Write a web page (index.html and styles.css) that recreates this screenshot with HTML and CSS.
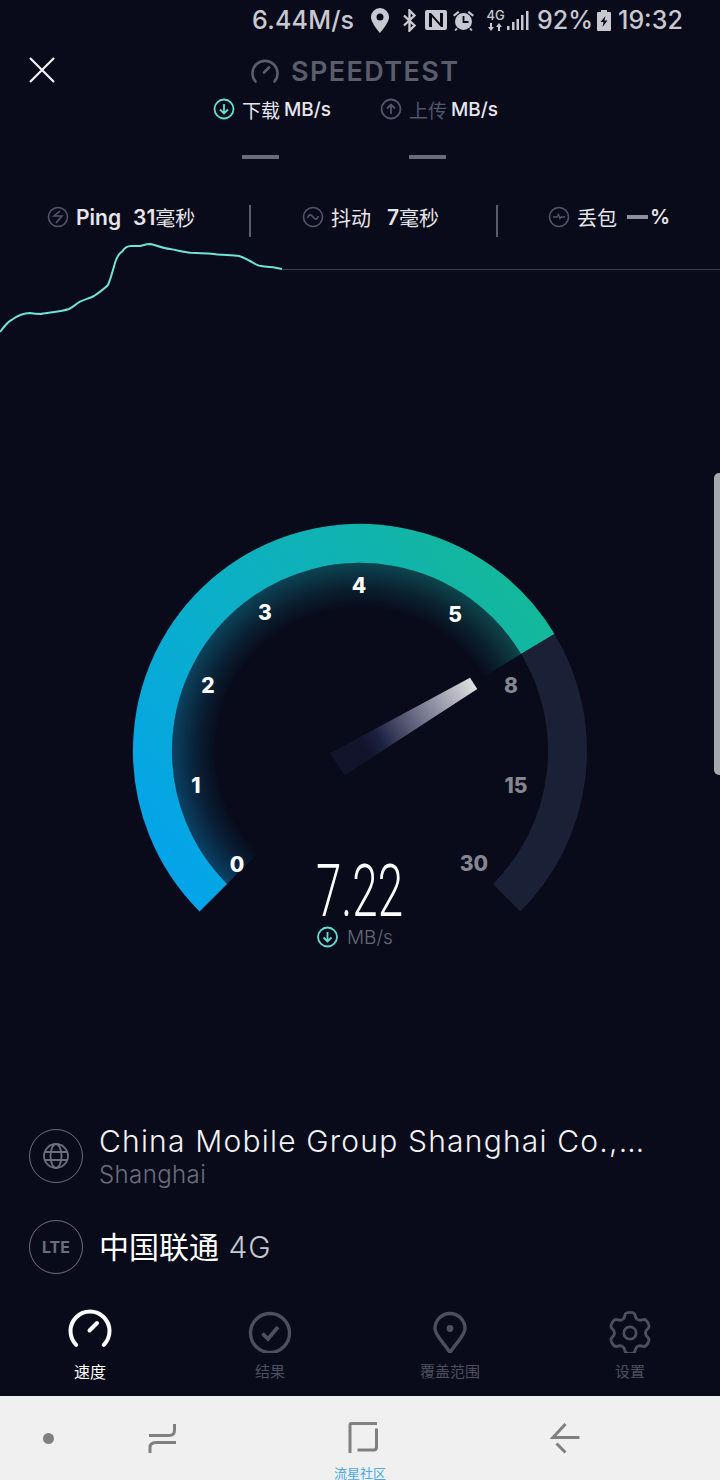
FILE: index.html
```html
<!DOCTYPE html>
<html>
<head>
	<meta charset="utf-8">
	<title>Speedtest</title>
	<link rel="stylesheet" href="styles.css">
</head>
<body>
<div class="screen">
	<div class="edge_handle"></div>

	<!-- status bar -->
	<div class="status">
		<span class="net_speed">6.44M/s</span>
		<svg class="st_pin" width="18" height="25" viewBox="0 0 18 25"><path fill-rule="evenodd" d="M9 0a9 9 0 0 1 9 9c0 6-9 16-9 16S0 15 0 9a9 9 0 0 1 9-9zm0 5.500a3.500 3.500 0 1 0 0 7 3.500 3.500 0 0 0 0-7z"/></svg>
		<svg class="st_bt" width="15" height="23" viewBox="0 0 15 23"><path d="M2 6.500l10.500 10L7.500 21.500V1.500l5 5L2 16.500" fill="none" stroke="#c8c9d0" stroke-width="2.400"/></svg>
		<svg class="st_nfc" width="22" height="20" viewBox="0 0 22 20"><path fill-rule="evenodd" d="M2 0h18a2 2 0 0 1 2 2v16a2 2 0 0 1-2 2H2a2 2 0 0 1-2-2V2a2 2 0 0 1 2-2zm2 3v14h3V7l9 10h2V3h-3v10L6 3z"/></svg>
		<svg class="st_alarm" width="21" height="21" viewBox="0 0 21 21"><path d="M0 5l5-4 1.500 1.500-5 4zM21 5l-5-4-1.500 1.500 5 4zM3 18l-1.500 2 1.300 1 2-2zM18 18l1.500 2-1.300 1-2-2z"/><circle cx="10.500" cy="11.500" r="8.500"/><path d="M10.500 6v6h5" fill="none" stroke="#090b1b" stroke-width="1.800"/></svg>
		<span class="st_net">
			<span class="st_4g">4G</span>
			<svg width="15" height="8" viewBox="0 0 15 8"><path d="M2 0h2v4h2L3 8 0 4h2zM11 0l3 4h-2v4h-2V4H8z"/></svg>
		</span>
		<svg class="st_signal" width="22" height="19" viewBox="0 0 22 19"><path d="M0 15h2.500v4H0zM5 11h2.500v8H5zM9.500 8H12v11H9.500zM14 4h2.500v15H14zM19 0h2.500v19H19z"/></svg>
		<span class="st_pct">92%</span>
		<svg class="st_batt" width="14" height="21" viewBox="0 0 14 21"><path fill-rule="evenodd" d="M4 0h6v2h3a1 1 0 0 1 1 1v17a1 1 0 0 1-1 1H1a1 1 0 0 1-1-1V3a1 1 0 0 1 1-1h3zM8.500 6L3.500 12h3L5.500 17l5-6.500h-3z"/></svg>
		<span class="st_time">19:32</span>
	</div>

	<!-- title -->
	<div class="top_row">
		<svg class="close" width="26" height="26" viewBox="0 0 26 26"><path d="M1 1l24 24M25 1L1 25" fill="none" stroke="#f2f2f4" stroke-width="2.200"/></svg>
		<div class="brand">
			<svg width="28" height="24" viewBox="0 0 28 24"><path d="M4.500 22.500a12.500 12.500 0 1 1 19 0" fill="none" stroke="#5b5d6b" stroke-width="2.600" stroke-linecap="round"/><path d="M13 13.500l5-5" stroke="#5b5d6b" stroke-width="2.600" stroke-linecap="round"/></svg>
			<span>SPEEDTEST</span>
		</div>
	</div>

	<!-- download / upload -->
	<div class="speeds">
		<div class="speed_col">
			<div class="speed_head">
				<svg class="circ" width="22" height="22" viewBox="0 0 22 22"><circle cx="11" cy="11" r="9.500" fill="none" stroke="#62dfd0" stroke-width="1.800"/><path d="M11 6v9.500M7 11.500l4 4 4-4" fill="none" stroke="#62dfd0" stroke-width="1.800"/></svg>
				<span class="cn_light">下载</span><b>MB/s</b>
			</div>
			<div class="dash"></div>
		</div>
		<div class="speed_col">
			<div class="speed_head">
				<svg class="circ" width="22" height="22" viewBox="0 0 22 22"><circle cx="11" cy="11" r="9.500" fill="none" stroke="#53566a" stroke-width="1.800"/><path d="M11 16V6.500M7 10.500l4-4 4 4" fill="none" stroke="#53566a" stroke-width="1.800"/></svg>
				<span class="cn_dim">上传</span><b>MB/s</b>
			</div>
			<div class="dash"></div>
		</div>
	</div>

	<!-- ping row -->
	<div class="stats">
		<div class="stat first">
			<svg class="circ" width="22" height="22" viewBox="0 0 22 22"><circle cx="11" cy="11" r="9.500" fill="none" stroke="#53566a" stroke-width="1.600"/><path d="M13 5l-6 5h8l-6 7" fill="none" stroke="#53566a" stroke-width="1.600"/></svg>
			<b>Ping</b><b class="val">31</b><span>毫秒</span>
		</div>
		<div class="stat">
			<svg class="circ" width="22" height="22" viewBox="0 0 22 22"><circle cx="11" cy="11" r="9.500" fill="none" stroke="#53566a" stroke-width="1.600"/><path d="M5.500 12c1.500-4 3.500-4 5.500-1s4 3 5.500-1" fill="none" stroke="#53566a" stroke-width="1.600"/></svg>
			<span>抖动</span><b class="val wide">7</b><span>毫秒</span>
		</div>
		<div class="stat last">
			<svg class="circ" width="22" height="22" viewBox="0 0 22 22"><circle cx="11" cy="11" r="9.500" fill="none" stroke="#53566a" stroke-width="1.600"/><path d="M5 11h4l1.500-2.500 1.500 4 1-1.500h4" fill="none" stroke="#53566a" stroke-width="1.400"/></svg>
			<span>丢包</span><i class="stat_dash"></i><b class="pct">%</b>
		</div>
	</div>

	<!-- live graph -->
	<svg class="graph" width="720" height="96" viewBox="0 240 720 96">
		<path d="M282 269.500H720" stroke="#3a3d4c" stroke-width="1" fill="none"/>
		<path d="M0 332C4 327 7 322 11.500 320 17 316 24 313 30 313 35 314 38 314 41 314 50 312 60 312 69 309 73 307 76 304 80 301.700 86 299 90 298 94 296 100 292 104 289 108 285 111 278 113 270 115 263 117 256 120 253 122 251.700 125 247 128 246 131 246 134 246 137 246 140 246 144 245 147 244 150.600 244 156 245 162 248 170 249 177 250 183 252 190.500 252.700 197 253 204 253 211 253.700 220 255 230 255 239 256 243 257 246 259 250 261 254 263 257 266 261 266 266 267 271 267 275.500 267.700L282 269" fill="none" stroke="#6fe3d4" stroke-width="2"/>
	</svg>

	<!-- gauge -->
	<svg class="gauge" width="720" height="460" viewBox="0 500 720 460">
		<defs>
			<linearGradient id="arc_fill" gradientUnits="userSpaceOnUse" x1="190" y1="900" x2="540" y2="620">
				<stop offset="0" stop-color="#03a4ea"/>
				<stop offset="0.4" stop-color="#0aaecc"/>
				<stop offset="0.8" stop-color="#10b3ae"/>
				<stop offset="1" stop-color="#14b89a"/>
			</linearGradient>
			<linearGradient id="glow_tint" gradientUnits="userSpaceOnUse" x1="190" y1="900" x2="540" y2="620">
				<stop offset="0" stop-color="#0a4a74"/>
				<stop offset="1" stop-color="#0e4e50"/>
			</linearGradient>
			<radialGradient id="glow_fade" gradientUnits="userSpaceOnUse" cx="360" cy="751" r="188">
				<stop offset="0.76" stop-color="#000"/>
				<stop offset="0.87" stop-color="#555"/>
				<stop offset="1" stop-color="#ddd"/>
			</radialGradient>
			<mask id="glow_mask" maskUnits="userSpaceOnUse" x="160" y="550" width="400" height="400">
				<rect x="160" y="550" width="400" height="400" fill="url(#glow_fade)"/>
			</mask>
			<linearGradient id="needle_fill" gradientUnits="userSpaceOnUse" x1="338" y1="764" x2="474" y2="683">
				<stop offset="0" stop-color="#11142a"/>
				<stop offset="0.2" stop-color="#11142a"/>
				<stop offset="0.3" stop-color="#1a2040"/>
				<stop offset="0.6" stop-color="#70738a"/>
				<stop offset="1" stop-color="#dfe0e2"/>
			</linearGradient>
		</defs>
		<path d="M360 751L227.100 883.900A188 188 0 1 1 521 654L360 751z" fill="url(#glow_tint)" mask="url(#glow_mask)"/>
		<path d="M213.300 897.700A207.500 207.500 0 1 1 537.800 644" fill="none" stroke="url(#arc_fill)" stroke-width="39"/>
		<path d="M537.800 644A207.500 207.500 0 0 1 506.700 897.700" fill="none" stroke="#1a2136" stroke-width="39"/>
		<polygon points="470,677.700 477.300,689 345,775 330,753.300" fill="url(#needle_fill)"/>

		<text class="tick" x="237" y="872">0</text>
		<text class="tick" x="196" y="793">1</text>
		<text class="tick" x="208" y="693">2</text>
		<text class="tick" x="265" y="620">3</text>
		<text class="tick" x="359" y="593">4</text>
		<text class="tick" x="455" y="622">5</text>
		<text class="tick off" x="511" y="693">8</text>
		<text class="tick off" x="516" y="793">15</text>
		<text class="tick off" x="474" y="871">30</text>

		<text class="big_val" x="316" y="916" textLength="87" lengthAdjust="spacingAndGlyphs">7.22</text>
		<g fill="none" stroke="#62dfd0" stroke-width="1.800">
			<circle cx="327.500" cy="937" r="9.500"/>
			<path d="M327.500 932v9.500M323.500 937.500l4 4 4-4"/>
		</g>
		<text class="unit" x="347" y="943.500">MB/s</text>
	</svg>

	<!-- server info -->
	<div class="info">
		<div class="info_row">
			<div class="ring">
				<svg width="30" height="30" viewBox="0 0 30 30" fill="none" stroke="#6c6e7c" stroke-width="1.800"><circle cx="15" cy="15" r="12"/><ellipse cx="15" cy="15" rx="5.500" ry="12"/><path d="M3.500 11h23M3.500 19h23"/></svg>
			</div>
			<div>
				<div class="isp">China Mobile Group Shanghai Co.,…</div>
				<div class="city">Shanghai</div>
			</div>
		</div>
		<div class="info_row second">
			<div class="ring lte">LTE</div>
			<div class="carrier"><span>中国联通</span> 4G</div>
		</div>
	</div>

	<!-- tabs -->
	<div class="tabs">
		<div class="tab active">
			<svg width="44" height="44" viewBox="0 0 44 44"><path d="M8.200 35.800a19.500 19.500 0 1 1 27.600 0" fill="none" stroke="#fff" stroke-width="4" stroke-linecap="round"/><path d="M21.500 21.500L29 14" stroke="#fff" stroke-width="4" stroke-linecap="round"/></svg>
			<span>速度</span>
		</div>
		<div class="tab">
			<svg width="44" height="44" viewBox="0 0 44 44" fill="none" stroke="#4d4f5e" stroke-width="3.400"><circle cx="22" cy="24" r="19.500"/><path d="M14.500 24.500l5.500 5.500 10-12" stroke-width="3.800"/></svg>
			<span>结果</span>
		</div>
		<div class="tab">
			<svg width="44" height="44" viewBox="0 0 44 44"><path d="M22 43.500C15 33 7 26 7 19.500a15 15 0 0 1 30 0C37 26 29 33 22 43.500z" fill="none" stroke="#4d4f5e" stroke-width="3.400" stroke-linejoin="round"/><circle cx="22" cy="19.500" r="3.400" fill="#4d4f5e"/></svg>
			<span>覆盖范围</span>
		</div>
		<div class="tab">
			<svg width="44" height="44" viewBox="-22 -24 44 44" fill="none" stroke="#4d4f5e" stroke-width="2.800">
				<defs><path id="gear_tooth" d="M-7.750-13.420Q-5.600-14.500-5-18Q-4.500-20.600 0-20.600Q4.500-20.600 5-18Q5.600-14.500 7.750-13.420"/></defs>
				<use href="#gear_tooth"/>
				<use href="#gear_tooth" transform="rotate(60)"/>
				<use href="#gear_tooth" transform="rotate(120)"/>
				<use href="#gear_tooth" transform="rotate(180)"/>
				<use href="#gear_tooth" transform="rotate(240)"/>
				<use href="#gear_tooth" transform="rotate(300)"/>
				<circle r="6.200"/>
			</svg>
			<span>设置</span>
		</div>
	</div>

	<!-- android nav -->
	<div class="softkeys">
		<i class="key_dot"></i>
		<svg class="key_recent" width="30" height="32" viewBox="0 0 30 32" fill="none" stroke="#808080" stroke-width="3"><path d="M1 13.500H21q5.500 0 5.500-5V2"/><path d="M28 20.500H8q-6 0-6 5V31"/></svg>
		<svg class="key_home" width="30" height="32" viewBox="0 0 30 32" fill="none" stroke="#808080" stroke-width="3"><path d="M2 31V3q0-1.500 1.500-1.500H29"/><path d="M28.500 6.500V25q0 3-3 3H9.500"/></svg>
		<svg class="key_back" width="30" height="32" viewBox="0 0 30 32" fill="none" stroke="#808080" stroke-width="3"><path d="M15.500 2L3 15.500H29.500M6.500 21.500L15.500 30.500"/></svg>
		<span class="watermark">流星社区</span>
	</div>
</div>
</body>
</html>
```

FILE: styles.css
```css
* {
	box-sizing: border-box;
}
html, body {
	margin: 0;
	padding: 0;
	background-color: #090b1b;
}
body {
	font-family: "Inter", "Noto Sans CJK SC", sans-serif;
}
svg {
	display: block;
	flex: none;
}

.screen {
	position: relative;
	width: 720px;
	height: 1480px;
	overflow: hidden;
	display: flex;
	flex-direction: column;
	color: #f2f2f4;
}
.edge_handle {
	position: absolute;
	right: 0;
	top: 473px;
	width: 6px;
	height: 302px;
	background-color: #a8a9ae;
	border-radius: 5px 0 0 5px;
}

/* status bar */
.status {
	height: 40px;
	padding-left: 252px;
	display: flex;
	align-items: center;
	color: #c8c9d0;
	fill: #c8c9d0;
	font-size: 25px;
	font-weight: 500;
}
.net_speed {
	width: 119px;
	letter-spacing: 0.2px;
}
.st_bt { margin-left: 13px; }
.st_nfc { margin-left: 8px; }
.st_alarm { margin-left: 6px; }
.st_net {
	margin-left: 14px;
	width: 15px;
	display: flex;
	flex-direction: column;
	align-items: center;
}
.st_4g {
	font-size: 13px;
	line-height: 12px;
	margin-bottom: 2px;
}
.st_signal { margin-left: 4px; }
.st_pct { margin-left: 8px; width: 60px; }
.st_batt { margin-right: 7px; }

/* title */
.top_row {
	height: 57px;
	padding: 17px 0 0 29px;
	display: flex;
	align-items: flex-start;
}
.brand {
	margin-left: 196px;
	display: flex;
	align-items: center;
	color: #5b5d6b;
	font-size: 27px;
	font-weight: 600;
	letter-spacing: 1.4px;
	line-height: 26px;
}
.brand span {
	margin-left: 12px;
	padding-top: 2px;
}

/* download upload */
.speeds {
	height: 108px;
	padding-left: 213px;
	display: flex;
}
.speed_col {
	width: 167px;
}
.speed_head {
	display: flex;
	align-items: center;
	height: 24px;
	font-size: 19px;
	white-space: pre;
}
.speed_head b {
	font-weight: 500;
	font-size: 19px;
	margin-left: 4px;
	color: #e6e6ea;
}
.speed_head .circ {
	margin-right: 7px;
}
.cn_light { color: #e6e6ea; }
.cn_dim { color: #53566a; }
.dash {
	width: 37px;
	height: 4px;
	margin: 34px 0 0 29px;
	background-color: #6a6c7a;
}

/* ping row */
.stats {
	height: 32px;
	display: flex;
}
.stat {
	width: 247px;
	padding: 0 0 8px 51px;
	display: flex;
	align-items: center;
	font-size: 20px;
	border-right: 2px solid #5a5c6a;
	color: #e6e6ea;
}
.stat.first {
	width: 251px;
	padding-left: 47px;
}
.stat.last {
	flex: 1;
	padding-left: 50px;
	border-right: 0;
}
.stat .circ {
	margin-right: 7px;
}
.stat b {
	font-weight: 600;
	font-size: 21px;
}
.stat .val {
	margin-left: 12px;
}
.stat .val.wide {
	margin-left: 16px;
}
.stat .pct {
	font-size: 20px;
}
.stat_dash {
	width: 21px;
	height: 4px;
	margin: 0 2px 0 10px;
	background-color: #8f909c;
}

/* graph and gauge */
.graph {
	margin-top: 3px;
}
.gauge {
	margin-top: 164px;
}
.tick {
	font-size: 21px;
	font-weight: 800;
	fill: #fff;
	text-anchor: middle;
}
.tick.off {
	fill: #85868f;
}
.big_val {
	font-family: "Roboto", sans-serif;
	font-weight: 300;
	font-size: 72px;
	fill: #fff;
}
.unit {
	font-size: 19px;
	font-weight: 300;
	fill: #666876;
}

/* server info */
.info {
	margin-top: 161px;
	height: 188px;
	padding-left: 29px;
}
.info_row {
	display: flex;
	align-items: center;
	gap: 16px;
}
.info_row.second {
	margin-top: 30px;
}
.ring {
	width: 54px;
	height: 54px;
	border: 1px solid #6c6e7c;
	border-radius: 50%;
	display: flex;
	align-items: center;
	justify-content: center;
}
.ring.lte {
	color: #6c6e7c;
	font-size: 16px;
	font-weight: 700;
}
.isp {
	padding-top: 2px;
	font-size: 30px;
	font-weight: 300;
	line-height: 36px;
	letter-spacing: 1.2px;
	white-space: nowrap;
}
.city {
	margin-top: 1px;
	font-size: 24px;
	font-weight: 300;
	line-height: 30px;
	letter-spacing: 0.4px;
	color: #6c6e7c;
}
.carrier {
	padding-bottom: 4px;
	font-size: 30px;
	font-weight: 300;
	letter-spacing: 1px;
	color: #c8c9d0;
}
.carrier span {
	color: #fff;
	font-weight: 400;
	letter-spacing: 0;
}

/* tabs */
.tabs {
	display: flex;
	height: 87px;
}
.tab {
	width: 180px;
	display: flex;
	flex-direction: column;
	align-items: center;
	font-size: 15px;
	color: #4d4f5e;
}
.tab span {
	margin-top: 8px;
	line-height: 22px;
}
.tab.active {
	font-size: 16px;
	color: #fff;
}

/* android nav */
.softkeys {
	position: relative;
	flex: 1;
	padding-top: 26px;
	display: flex;
	align-items: flex-start;
	background-color: #f0f0f0;
}
.key_dot {
	width: 11px;
	height: 11px;
	margin: 11px 0 0 43px;
	border-radius: 50%;
	background-color: #808080;
}
.key_recent { margin-left: 94px; }
.key_home { margin-left: 170px; }
.key_back { margin-left: 172px; }
.watermark {
	position: absolute;
	left: 334px;
	bottom: 0;
	font-size: 13px;
	line-height: 13px;
	color: #4aa8ee;
}
```
